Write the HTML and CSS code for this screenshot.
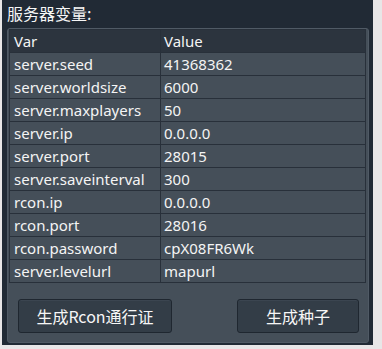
FILE: index.html
```html
<!DOCTYPE html>
<html lang="zh">
<head>
<meta charset="utf-8">
<title>服务器变量</title>
<link rel="stylesheet" href="styles.css">
</head>
<body>
<div class="window">
  <div class="title">服务器变量:</div>
  <div class="group">
    <table class="vars">
      <thead>
        <tr><th class="c1">Var</th><th class="c2">Value</th></tr>
      </thead>
      <tbody>
        <tr><td class="c1">server.seed</td><td class="c2">41368362</td></tr>
        <tr><td class="c1">server.worldsize</td><td class="c2">6000</td></tr>
        <tr><td class="c1">server.maxplayers</td><td class="c2">50</td></tr>
        <tr><td class="c1">server.ip</td><td class="c2">0.0.0.0</td></tr>
        <tr><td class="c1">server.port</td><td class="c2">28015</td></tr>
        <tr><td class="c1">server.saveinterval</td><td class="c2">300</td></tr>
        <tr><td class="c1">rcon.ip</td><td class="c2">0.0.0.0</td></tr>
        <tr><td class="c1">rcon.port</td><td class="c2">28016</td></tr>
        <tr><td class="c1">rcon.password</td><td class="c2">cpX08FR6Wk</td></tr>
        <tr><td class="c1">server.levelurl</td><td class="c2">mapurl</td></tr>
      </tbody>
    </table>
    <div class="actions">
      <button class="btn btn-rcon">生成Rcon通行证</button>
      <button class="btn btn-seed">生成种子</button>
    </div>
  </div>
</div>
</body>
</html>
```

FILE: styles.css
```css
html, body {
  margin: 0;
  padding: 0;
}
body {
  background: #e8e6e7;
  width: 382px;
  height: 349px;
  overflow: hidden;
  font-family: "Noto Sans", "Noto Sans CJK SC", sans-serif;
  color: #f4f4f4;
}
.window {
  box-sizing: border-box;
  width: 371px;
  height: 345px;
  margin-left: 2px;
  background: #212a35;
  padding: 2px 5px 2px 5px;
  display: flex;
  flex-direction: column;
}
.title {
  font-family: "Noto Sans CJK SC", sans-serif;
  font-size: 16px;
  line-height: 22px;
  height: 22px;
  margin-bottom: 4px;
  padding-left: 0;
  color: #f6f6f6;
}
.group {
  box-sizing: border-box;
  flex: 1;
  width: 362px;
  background: #454f59;
  border: 1px solid #505a65;
  border-radius: 3px;
  padding: 0 0 0 1px;
  display: flex;
  flex-direction: column;
}
.vars {
  border-collapse: separate;
  border-spacing: 0;
  width: 357px;
  table-layout: fixed;
  border-top: 1px solid #28303a;
  border-left: 1px solid #28303a;
  font-size: 15px;
}
.vars th, .vars td {
  box-sizing: content-box;
  height: 22px;
  padding: 0 0 0 4px;
  text-align: left;
  font-weight: normal;
  white-space: nowrap;
  line-height: 22px;
  border-bottom: 1px solid #28303a;
  border-right: 1px solid #28303a;
}
.vars th.c1, .vars td.c1 {
  width: 146px;
}
.vars th.c2, .vars td.c2 {
  padding-left: 3px;
}
.vars thead th {
  background: #2c343e;
}
.vars tbody td {
  background: #454f59;
}
.actions {
  display: flex;
  justify-content: space-between;
  padding: 0 9px 0 9px;
  margin-top: 16px;
}
.btn {
  box-sizing: border-box;
  height: 34px;
  background: #333d47;
  border: 1px solid #1f2730;
  border-radius: 3px;
  box-shadow: inset 0 1px 0 #3b4550;
  color: #f6f6f6;
  font-family: "Noto Sans CJK SC", sans-serif;
  font-size: 16px;
  padding: 0;
  line-height: 32px;
}
.btn-rcon {
  width: 154px;
}
.btn-seed {
  width: 122px;
}
```
